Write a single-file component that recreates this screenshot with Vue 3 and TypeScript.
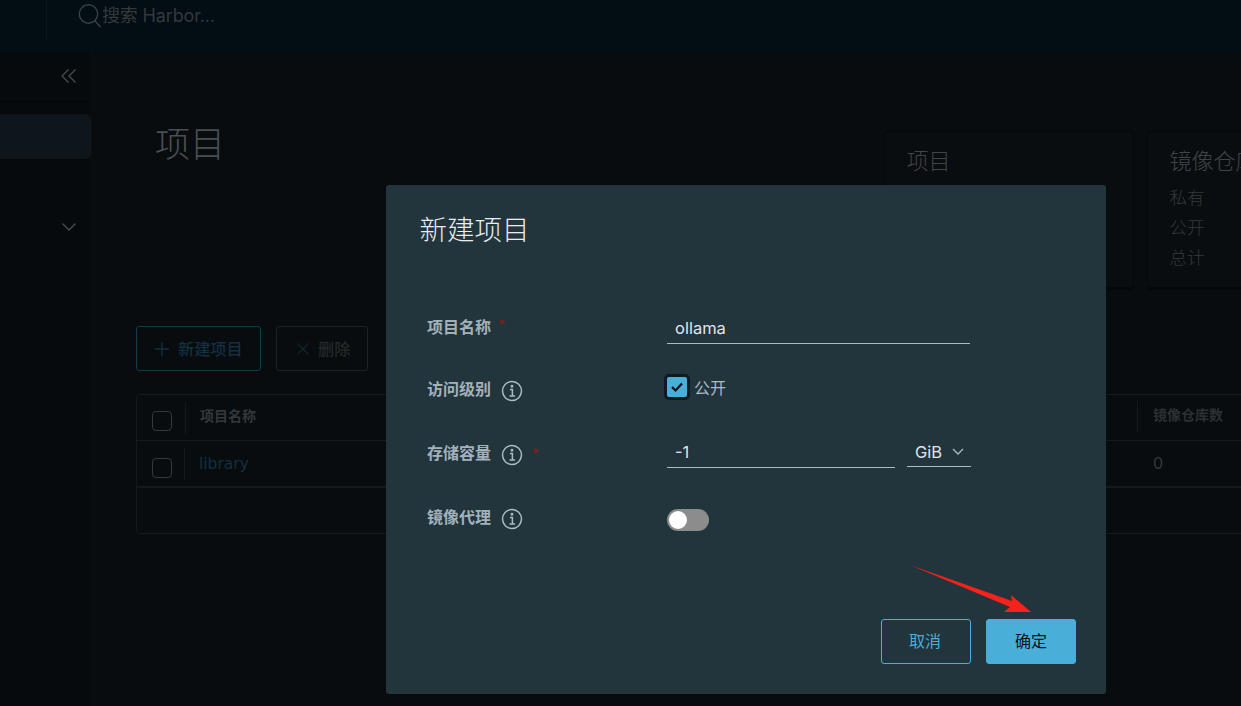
<script setup lang="ts">
const rows = [
  { label: '私有' },
  { label: '公开' },
  { label: '总计' },
]
</script>

<template>
  <div class="page">
    <header class="topbar">
      <div class="brand"></div>
      <div class="search">
        <svg class="search-icon" width="24" height="28" viewBox="0 0 24 28" fill="none">
          <circle cx="10.5" cy="12" r="9.2" stroke="#3a4144" stroke-width="1.4" />
          <path d="M17 19l5.5 6" stroke="#3a4144" stroke-width="1.4" />
        </svg>
        <span class="search-text">搜索 Harbor...</span>
      </div>
    </header>

    <div class="body">
      <aside class="sidebar">
        <div class="collapse">
          <svg width="16" height="16" viewBox="0 0 16 16" fill="none" stroke="#4a4f52" stroke-width="1.2">
            <path d="M7.5 1.5 1 8l6.5 6.5M14.5 1.5 8 8l6.5 6.5" />
          </svg>
        </div>
        <div class="nav-active"></div>
        <div class="nav-group">
          <svg width="16" height="10" viewBox="0 0 16 10" fill="none" stroke="#4a4f52" stroke-width="1.3">
            <path d="M1.5 1.5 8 8l6.5-6.5" />
          </svg>
        </div>
      </aside>

      <main class="main">
        <section class="summary">
          <h1 class="page-title">项目</h1>
          <div class="cards">
            <div class="card">
              <div class="card-title">项目</div>
            </div>
            <div class="card">
              <div class="card-title">镜像仓库</div>
              <div class="card-rows">
                <div v-for="row in rows" :key="row.label" class="card-row">{{ row.label }}</div>
              </div>
            </div>
          </div>
        </section>

        <div class="actions">
          <button class="act act-new" type="button">
            <svg width="14" height="14" viewBox="0 0 14 14" stroke="#12303f" stroke-width="1.3"><path d="M7 0v14M0 7h14" /></svg>
            <span class="act-text">新建项目</span>
          </button>
          <button class="act act-del" type="button">
            <svg width="12" height="12" viewBox="0 0 12 12" stroke="#12242e" stroke-width="1.2"><path d="M.5.5l11 11M11.5.5l-11 11" /></svg>
            <span class="act-text">删除</span>
          </button>
        </div>

        <div class="table">
          <div class="tr th">
            <div class="cell-check"><span class="box"></span></div>
            <div class="cell-name">项目名称</div>
            <div class="cell-count">镜像仓库数</div>
          </div>
          <div class="tr td">
            <div class="cell-check"><span class="box"></span></div>
            <div class="cell-name link">library</div>
            <div class="cell-count">0</div>
          </div>
        </div>
      </main>
    </div>

    <div class="modal">
      <h2 class="modal-title">新建项目</h2>
      <form class="form" @submit.prevent>
        <div class="form-row row-name">
          <div class="label">项目名称<span class="req">*</span></div>
          <div class="field field-name">ollama</div>
        </div>
        <div class="form-row">
          <div class="label">访问级别
            <svg class="info" width="22" height="22" viewBox="0 0 22 22" fill="none" stroke="#acbac3" stroke-width="1.5">
              <circle cx="11" cy="11" r="9.5" />
              <path d="M9 9.5h2.4V16M8.5 16h5.5" />
              <circle cx="11" cy="6.3" r=".7" fill="#acbac3" />
            </svg>
          </div>
          <div class="check">
            <span class="check-box">
              <svg width="14" height="12" viewBox="0 0 14 12" fill="none" stroke="#0b1216" stroke-width="2.2"><path d="M2 6l3.5 3.5L12 2.5" /></svg>
            </span>
            <span class="check-label">公开</span>
          </div>
        </div>
        <div class="form-row">
          <div class="label">存储容量
            <svg class="info" width="22" height="22" viewBox="0 0 22 22" fill="none" stroke="#acbac3" stroke-width="1.5">
              <circle cx="11" cy="11" r="9.5" />
              <path d="M9 9.5h2.4V16M8.5 16h5.5" />
              <circle cx="11" cy="6.3" r=".7" fill="#acbac3" />
            </svg>
            <span class="req req-far">*</span>
          </div>
          <div class="quota">
            <div class="field field-quota">-1</div>
            <div class="select">
              <span>GiB</span>
              <svg width="12" height="8" viewBox="0 0 12 8" fill="none" stroke="#acbac3" stroke-width="1.3"><path d="M1 1l5 5 5-5" /></svg>
            </div>
          </div>
        </div>
        <div class="form-row">
          <div class="label">镜像代理
            <svg class="info" width="22" height="22" viewBox="0 0 22 22" fill="none" stroke="#acbac3" stroke-width="1.5">
              <circle cx="11" cy="11" r="9.5" />
              <path d="M9 9.5h2.4V16M8.5 16h5.5" />
              <circle cx="11" cy="6.3" r=".7" fill="#acbac3" />
            </svg>
          </div>
          <div class="toggle"><span class="knob"></span></div>
        </div>
      </form>
      <div class="modal-foot">
        <button class="btn btn-cancel" type="button">取消</button>
        <button class="btn btn-ok" type="button">确定</button>
      </div>
    </div>

    <svg class="arrow" width="124" height="52" viewBox="0 0 124 52">
      <path d="M0 0 L102 36 L101 30 L121 47 L94 47 L100 42 Z" fill="#f5231b" />
    </svg>
  </div>
</template>

<style>
html, body { margin: 0; background: #080c0f; }
</style>

<style scoped>
.page {
  position: relative;
  width: 1241px;
  height: 706px;
  overflow: hidden;
  background: #080c0f;
  font-family: "Inter", "Noto Sans CJK SC", sans-serif;
}
.topbar {
  height: 52px;
  display: flex;
  background: #020d14;
}
.brand {
  width: 46px;
  height: 40px;
  border-right: 1px solid #0a151c;
}
.search {
  display: flex;
  align-items: flex-start;
  padding-left: 31px;
}
.search-icon { margin-top: 2px; }
.search-text {
  font-size: 18px;
  letter-spacing: -0.15px;
  line-height: 32px;
  color: #33393c;
}
.body {
  display: flex;
  height: 654px;
}
.sidebar {
  width: 91px;
  flex: none;
  border-right: 1px solid #0b0f12;
  background: #070a0d;
}
.collapse {
  height: 47px;
  box-sizing: border-box;
  border-bottom: 1px solid #0a0e11;
  display: flex;
  align-items: center;
  justify-content: flex-end;
  padding: 2px 14px 0 0;
}
.nav-active {
  height: 45px;
  margin-top: 15px;
  background: #0e151b;
  border-radius: 0 6px 6px 0;
}
.nav-group {
  margin-top: 63px;
  display: flex;
  justify-content: flex-end;
  padding-right: 14px;
}
.main {
  flex: 1;
  min-width: 0;
  padding: 79px 0 0 44px;
  box-sizing: border-box;
}
.summary {
  display: flex;
  height: 195px;
  box-sizing: border-box;
}
.page-title {
  margin: -8px 0 0 19px;
  font-size: 35px;
  font-weight: 300;
  line-height: 42px;
  color: #4a4f52;
  width: 729px;
  flex: none;
}
.cards {
  display: flex;
  gap: 13px;
  flex: none;
}
.card {
  width: 250px;
  height: 159px;
  box-sizing: border-box;
  padding: 13px 22px 13px 21.5px;
  background: #090d10;
  border: 1px solid #05080a;
  border-bottom-width: 3px;
  border-radius: 4px;
}
.card-title {
  font-size: 22px;
  font-weight: 300;
  line-height: 32px;
  color: #3f4447;
  white-space: nowrap;
}
.card-rows { margin-top: 6px; }
.card-row {
  font-size: 17.5px;
  font-weight: 300;
  line-height: 30px;
  color: #33393c;
}
.actions {
  display: flex;
  gap: 15px;
}
.act {
  height: 45px;
  box-sizing: border-box;
  display: flex;
  align-items: center;
  background: transparent;
  border-radius: 3px;
  font-family: inherit;
  font-size: 16.2px;
  padding: 0;
}
.act-text { margin-top: -2px; font-weight: 500; }
.act-new {
  width: 125px;
  border: 1px solid #113a4d;
  color: #12303f;
  padding-left: 18px;
  gap: 9px;
}
.act-del {
  width: 92px;
  border: 1px solid #1c2125;
  color: #24282a;
  padding-left: 20px;
  gap: 9px;
}
.table {
  margin-top: 23px;
  width: 1200px;
  height: 140px;
  box-sizing: border-box;
  border: 1px solid #14191c;
  border-radius: 4px;
}
.tr {
  display: flex;
  height: 46px;
  box-sizing: border-box;
  align-items: center;
  border-bottom: 1px solid #14191c;
}
.td { border-bottom-width: 2px; height: 47px; }
.cell-check {
  width: 49px;
  height: 32px;
  flex: none;
  box-sizing: border-box;
  padding-left: 15px;
  display: flex;
  align-items: center;
  border-right: 1px solid #14191c;
}
.th .cell-check .box { margin-top: 6px; }
.td .cell-check { width: 48px; }
.td .cell-check .box { margin-top: 9px; }
.box {
  display: block;
  width: 20px;
  height: 20px;
  box-sizing: border-box;
  border: 1px solid #34393b;
  border-radius: 4px;
}
.cell-name {
  width: 951px;
  flex: none;
  box-sizing: border-box;
  padding-left: 14px;
  font-size: 14px;
  font-weight: 700;
  color: #33383b;
}
.td .cell-name { width: 952px; }
.th .cell-name { margin-top: -6px; }
.link {
  font-family: "DejaVu Sans", sans-serif;
  font-size: 15.5px;
  font-weight: 400;
  color: #12303f;
}
.cell-count {
  box-sizing: border-box;
  padding-left: 15px;
  height: 32px;
  line-height: 32px;
  border-left: 1px solid #14191c;
  font-size: 14px;
  font-weight: 700;
  color: #2b3033;
}
.th .cell-count { margin-top: -2px; line-height: 28px; }
.td .cell-count {
  border-left-color: transparent;
  font-size: 16px;
  font-weight: 400;
  line-height: 30px;
  color: #33383b;
}
.modal {
  position: absolute;
  left: 386px;
  top: 185px;
  width: 720px;
  height: 509px;
  box-sizing: border-box;
  padding: 27px 30px 30px 33.5px;
  background: #22343c;
  border-radius: 3px;
  display: flex;
  flex-direction: column;
}
.modal-title {
  margin: 0;
  font-size: 27.5px;
  font-weight: 300;
  line-height: 36px;
  color: #e9ecef;
}
.form {
  margin-top: 63px;
  padding-left: 7.5px;
  flex: 1;
}
.form-row {
  display: flex;
  height: 64px;
  align-items: flex-start;
}
.row-name .label,
.row-name .field { margin-top: 2px; }
.label {
  width: 240px;
  flex: none;
  display: flex;
  align-items: center;
  font-size: 16px;
  line-height: 22px;
  font-weight: 700;
  color: #a3b1ba;
  height: 28px;
}
.info { margin-left: 10px; margin-top: 4px; }
.req {
  color: #8f1a0d;
  font-size: 14px;
  margin-left: 7px;
  margin-top: -4px;
  font-weight: 400;
}
.req-far { margin-left: 9px; margin-top: 2px; }
.field {
  box-sizing: border-box;
  height: 30px;
  padding-left: 8px;
  border-bottom: 1px solid #acbac3;
  font-size: 16.5px;
  line-height: 30px;
  color: #e0e5e8;
}
.field-name { width: 303px; height: 31px; }
.quota { display: flex; gap: 12px; margin-top: -1px; }
.field-quota { width: 228px; line-height: 28px; }
.select {
  width: 64px;
  height: 29px;
  box-sizing: border-box;
  border-bottom: 1px solid #acbac3;
  display: flex;
  align-items: center;
  padding-left: 8px;
  gap: 10px;
  font-size: 16.5px;
  color: #e0e5e8;
}
.check {
  display: flex;
  align-items: center;
  gap: 4px;
  margin-left: -3px;
  margin-top: -1px;
}
.check-box {
  width: 26px;
  height: 26px;
  box-sizing: border-box;
  background: #49afd9;
  border: 3px solid #0f1a20;
  border-radius: 5px;
  display: flex;
  align-items: center;
  justify-content: center;
}
.check-label {
  font-size: 16px;
  color: #acbac3;
}
.toggle {
  position: relative;
  width: 42px;
  height: 22px;
  margin-top: 6px;
  background: #8c8c8c;
  border-radius: 11px;
}
.knob {
  position: absolute;
  left: 2px;
  top: 2px;
  width: 18px;
  height: 18px;
  background: #fff;
  border-radius: 50%;
}
.modal-foot {
  display: flex;
  justify-content: flex-end;
  gap: 15px;
}
.btn {
  width: 90px;
  height: 45px;
  box-sizing: border-box;
  border-radius: 3px;
  font-family: inherit;
  font-size: 16px;
  padding: 0 0 3px;
}
.btn-cancel {
  background: transparent;
  border: 1px solid #49afd9;
  color: #49afd9;
  padding-right: 2px;
}
.btn-ok {
  background: #49afd9;
  border: 1px solid #49afd9;
  color: #0b1216;
}
.arrow {
  position: absolute;
  left: 910px;
  top: 565px;
}
</style>
